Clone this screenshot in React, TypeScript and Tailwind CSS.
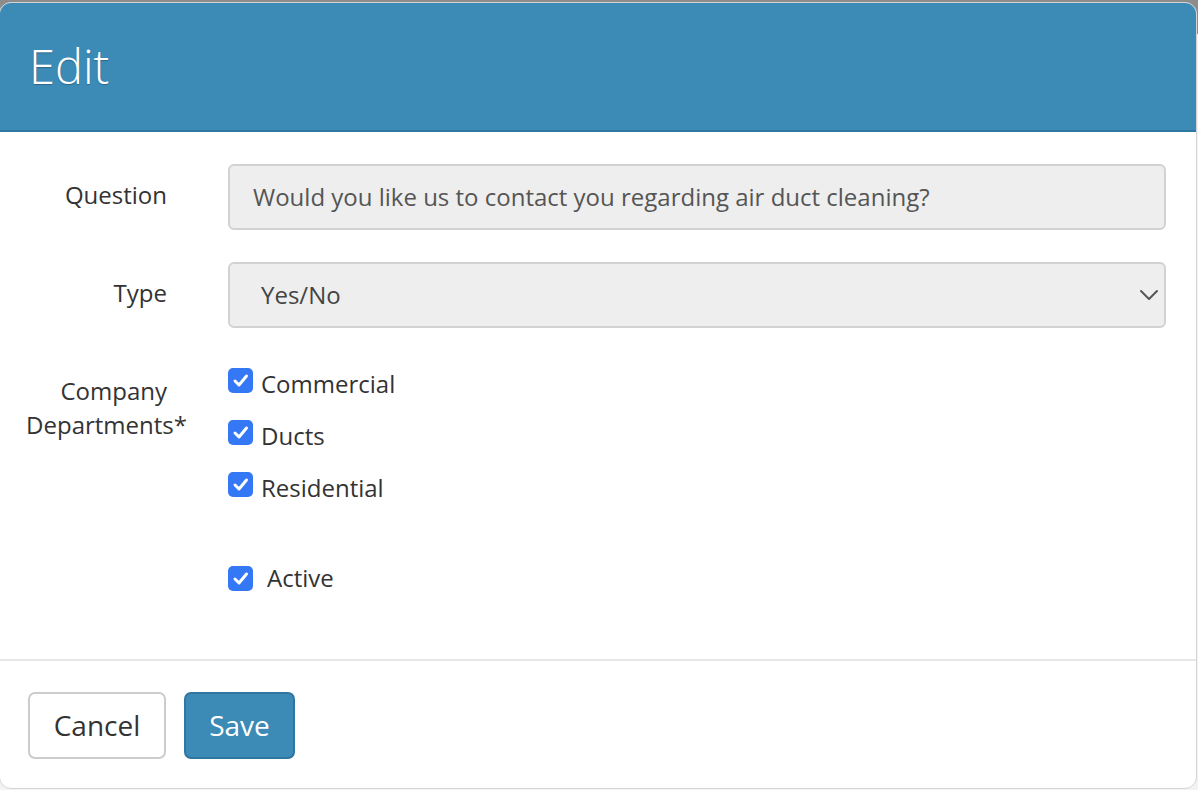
import React from "react";

const font = { fontFamily: '"Open Sans", "Liberation Sans", sans-serif' };

function CheckBox() {
  return (
    <span className="flex h-[25px] w-[25px] shrink-0 items-center justify-center rounded-[5px] bg-[#3478f6]">
      <svg width="17" height="17" viewBox="0 0 17 17" fill="none">
        <path d="M3 9 L7 13 L14.5 4" stroke="white" strokeWidth="3" strokeLinecap="round" strokeLinejoin="round" />
      </svg>
    </span>
  );
}

function Check({ label }: { label: string }) {
  return (
    <label className="flex h-[26px] items-start gap-[8px] text-[24px] leading-[30px] text-[#333]">
      <CheckBox />
      <span className="mt-[1px]">{label}</span>
    </label>
  );
}

export default function App() {
  return (
    <div className="relative h-[790px] w-[1198px] overflow-hidden bg-[#f3f3f3]" style={font}>
      {/* dimmed page behind the dialog */}
      <div className="h-[34px] bg-[#8c8c8c]" />

      <div className="absolute -left-px top-[2px] flex h-[787px] w-[1198px] flex-col overflow-hidden rounded-[12px] border border-[#d4d4d4] bg-white">
        <div className="flex h-[129px] shrink-0 items-center border-b-2 border-[#2f78a2] bg-[#3c8ab6] pl-[29px]">
          <h1 className="text-[47px] font-light leading-none text-white [text-shadow:0_1px_1px_rgba(0,0,0,0.25)]">
            Edit
          </h1>
        </div>

        <div className="flex flex-1 flex-col pr-[30px] pt-[32px]">
          <div className="grid grid-cols-[167px_1fr] items-center gap-x-[61px]">
            <span className="pb-[4px] text-right text-[24px] text-[#333]">Question</span>
            <div className="flex h-[66px] items-center rounded-[6px] border-2 border-[#d2d2d2] bg-[#eeeeee] px-[23px] text-[24px] text-[#555]">
              Would you like us to contact you regarding air duct cleaning?
            </div>
          </div>

          <div className="mt-[32px] grid grid-cols-[167px_1fr] items-center gap-x-[61px]">
            <span className="pb-[4px] text-right text-[24px] text-[#333]">Type</span>
            <div className="flex h-[66px] items-center justify-between rounded-[6px] border-2 border-[#d2d2d2] bg-[#eeeeee] pl-[31px] pr-[5px] text-[24px] text-[#444]">
              <span>Yes/No</span>
              <svg width="20" height="12" viewBox="0 0 20 12" fill="none">
                <path d="M2 2 L10 10 L18 2" stroke="#555" strokeWidth="2" strokeLinecap="round" strokeLinejoin="round" />
              </svg>
            </div>
          </div>

          <div className="mt-[40px] grid grid-cols-[167px_1fr] items-start gap-x-[61px]">
            <div className="pt-[6px] text-right text-[24px] leading-[34px] text-[#333]">
              <span className="block">Company</span>
              <span className="-mr-[20px] block">Departments*</span>
            </div>
            <div className="flex flex-col gap-[26px]">
              <Check label="Commercial" />
              <Check label="Ducts" />
              <Check label="Residential" />
            </div>
          </div>

          <div className="mt-[68px] grid grid-cols-[167px_1fr] gap-x-[61px]">
            <span />
            <label className="flex h-[26px] items-start gap-[14px] text-[24px] leading-[24px] text-[#333]">
              <CheckBox />
              <span>Active</span>
            </label>
          </div>
        </div>

        <div className="flex h-[129px] shrink-0 items-start gap-[18px] border-t-2 border-[#e6e6e6] pl-[28px] pt-[31px]">
          <button className="h-[67px] w-[138px] rounded-[7px] border-2 border-[#cccccc] bg-white pb-[2px] text-[28px] text-[#333]">
            Cancel
          </button>
          <button className="h-[67px] w-[111px] rounded-[7px] border-2 border-[#2f76a0] bg-[#3c8ab6] pb-[2px] text-[28px] text-white">
            Save
          </button>
        </div>
      </div>
    </div>
  );
}
